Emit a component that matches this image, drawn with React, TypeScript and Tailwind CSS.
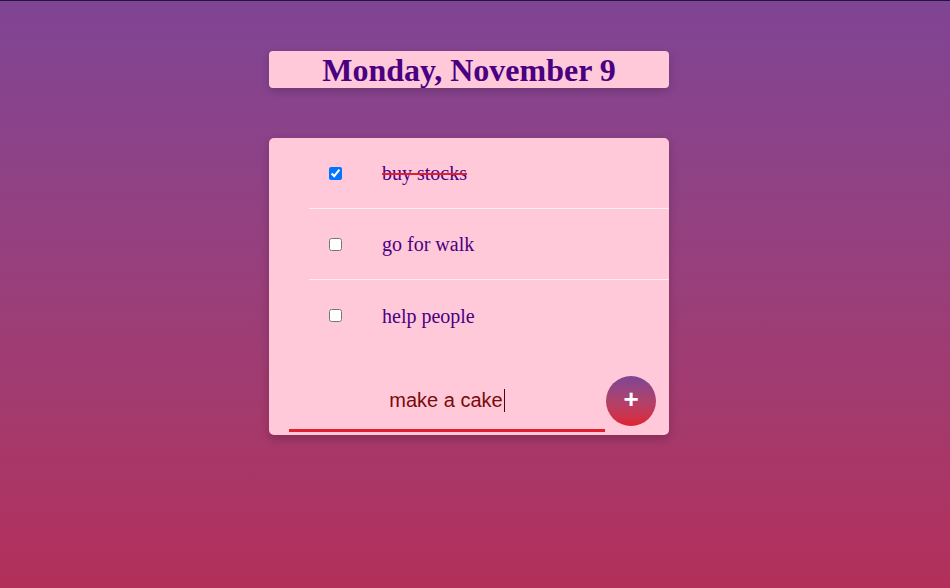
import { useState } from 'react'

const items = [
    { text: 'buy stocks', done: true },
    { text: 'go for walk', done: false },
    { text: 'help people', done: false },
]

function TodoRow({ text, done, last }: { text: string; done: boolean; last?: boolean }) {
    const [checked, setChecked] = useState(done)
    return (
        <div className={`ml-10 flex h-[71px] items-center ${last ? '' : 'border-b border-[#fbeef2]'}`}>
            <input
                type="checkbox"
                checked={checked}
                onChange={() => setChecked(!checked)}
                className="ml-5 h-[13px] w-[13px]"
            />
            <span
                className={`ml-10 text-[20px] text-[#4b0082] ${checked ? 'line-through decoration-[#e0202f] decoration-2' : ''}`}
                style={{ fontFamily: '"Liberation Serif", serif' }}
            >
                {text}
            </span>
        </div>
    )
}

export default function App() {
    return (
        <main className="flex min-h-[588px] flex-col items-center border-t border-[#1c1838] bg-gradient-to-b from-[#7f4495] to-[#b32f5a] pr-3">
            <header className="mt-[50px] flex h-[37px] w-[400px] items-center justify-center rounded-[4px] bg-[#ffc9d9] shadow-[0_3px_8px_rgba(0,0,0,0.18)]">
                <h1
                    className="text-[32px] font-bold leading-none text-[#4b0082]"
                    style={{ fontFamily: '"Liberation Serif", serif' }}
                >
                    Monday, November 9
                </h1>
            </header>
            <section className="mt-[50px] w-[400px] rounded-[5px] bg-[#ffc9d9] shadow-[0_4px_10px_rgba(0,0,0,0.2)]">
                {items.map((it, i) => (
                    <TodoRow key={it.text} text={it.text} done={it.done} last={i === items.length - 1} />
                ))}
                <form className="flex items-end pb-[9px] pl-5 pr-[13px] pt-[25px]" onSubmit={e => e.preventDefault()}>
                    <div className="mb-[-6px] flex h-[56px] w-[316px] items-start justify-center border-b-[3px] border-[#e0202f] pt-[13px]">
                        <span
                            className="border-r border-[#5a0000] pr-px text-[20px] leading-[23px] text-[#7a0a0a]"
                            style={{ fontFamily: '"Liberation Sans", Arial, sans-serif' }}
                        >
                            make a cake
                        </span>
                    </div>
                    <button
                        type="submit"
                        className="ml-px flex h-[50px] w-[50px] items-center justify-center rounded-full bg-gradient-to-b from-[#7f4495] to-[#e0202f] pb-1 text-[26px] font-bold leading-none text-white"
                        style={{ fontFamily: '"Liberation Sans", Arial, sans-serif' }}
                    >
                        +
                    </button>
                </form>
            </section>
        </main>
    )
}
